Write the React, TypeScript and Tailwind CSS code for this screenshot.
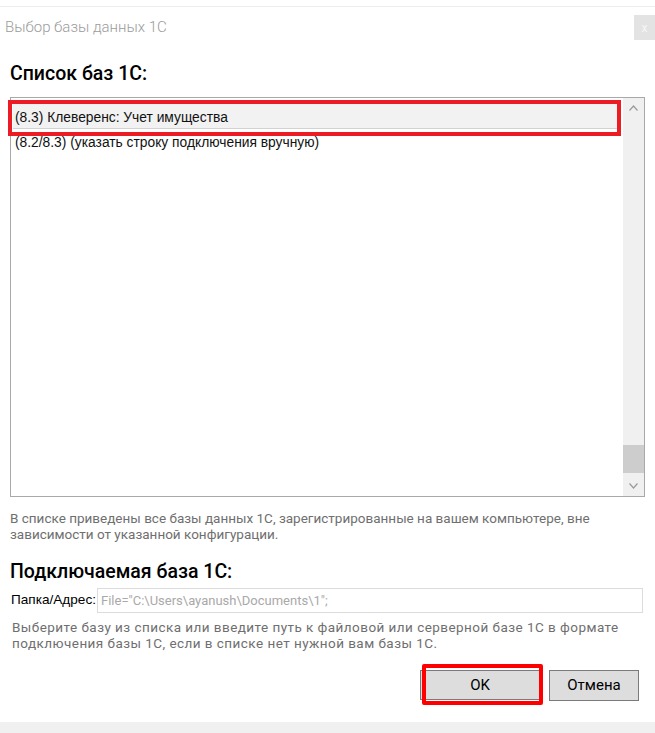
import React from 'react';

const ui = { fontFamily: 'Roboto, "Noto Sans", sans-serif' };
const sys = { fontFamily: '"Liberation Sans", Arial, sans-serif' };

const Chevron = ({ up }: { up?: boolean }) => (
  <svg width="9" height="6" viewBox="0 0 9 6" fill="none">
    <path
      d={up ? 'M0.5 5.5 L4.5 1 L8.5 5.5' : 'M0.5 0.5 L4.5 5 L8.5 0.5'}
      stroke="#9a9a9a"
      strokeWidth="1.2"
    />
  </svg>
);

export default function App() {
  return (
    <div className="relative w-[655px] h-[733px] bg-white flex flex-col overflow-hidden" style={ui}>
      <div className="h-[6px]" />
      <div className="h-px bg-[#ededed]" />

      {/* title bar */}
      <div className="mt-[8px] h-[25px] flex items-center justify-between">
        <span className="pl-[5px] text-[15px] font-light text-[#9b9b9b]">Выбор базы данных 1С</span>
        <div className="w-[21px] h-[25px] bg-[#e3e3e3] flex items-center justify-center text-[12px] text-[#f7f7f7]">x</div>
      </div>

      <h2 className="mt-[22px] h-[24px] leading-[24px] px-[10px] text-[19.5px] font-medium text-black">Список баз 1С:</h2>

      {/* list */}
      <div className="mt-[11px] ml-[10px] w-[635px] h-[400px] border border-[#a9a9a9] flex" style={sys}>
        <div className="flex-1 flex flex-col">
          <div className="mt-[6px] ml-[2px] mr-[4px] h-[25px] bg-[#f2f2f2] border-b border-[#d2d2d2] flex items-center pt-[4px] pl-[2px] text-[13.8px] text-[#111]">
            (8.3) Клеверенс: Учет имущества
          </div>
          <div className="mt-[4px] ml-[2px] h-[20px] flex items-center pl-[2px] text-[13.8px] text-[#111]">
            (8.2/8.3) (указать строку подключения вручную)
          </div>
        </div>
        <div className="w-[21px] bg-[#f0f0f0] flex flex-col">
          <div className="h-[20px] flex items-center justify-center"><Chevron up /></div>
          <div className="flex-1" />
          <div className="h-[28px] bg-[#cdcdcd]" />
          <div className="h-[3px]" />
          <div className="h-[20px] flex items-center justify-center"><Chevron /></div>
        </div>
      </div>

      <p className="mt-[13px] px-[10px] text-[13.5px] leading-[16px] text-[#6f6f6f]">
        В списке приведены все базы данных 1С, зарегистрированные на вашем компьютере, вне
        <br />
        зависимости от указанной конфигурации.
      </p>

      <h2 className="mt-[18px] h-[24px] leading-[24px] px-[10px] text-[19.5px] font-medium text-black">Подключаемая база 1С:</h2>

      <div className="mt-[4px] h-[25px] flex items-center">
        <span className="pl-[11px] w-[97px] text-[13.6px] text-black whitespace-nowrap" style={sys}>Папка/Адрес:</span>
        <div className="w-[546px] h-[25px] border border-[#dcdcdc] flex items-center pl-[3px] text-[13px] text-[#a9a9a9]">
          File="C:\Users\ayanush\Documents\1";
        </div>
      </div>

      <p className="mt-[6px] pl-[12px] text-[13.5px] tracking-[0.45px] leading-[16px] text-[#6f6f6f]">
        Выберите базу из списка или введите путь к файловой или серверной базе 1С в формате
        <br />
        подключения базы 1С, если в списке нет нужной вам базы 1С.
      </p>

      <div className="mt-[19px] flex justify-end gap-[9px] pr-[16px]">
        <button className="w-[120px] h-[30px] bg-[#dddddd] border border-[#7a7a7a] text-[15px] text-black">OK</button>
        <button className="w-[90px] h-[31px] bg-[#dddddd] border border-[#7a7a7a] text-[15px] text-black">Отмена</button>
      </div>

      <div className="mt-auto h-[11px] bg-[#f0f0f0]" />

      {/* annotation frames */}
      <div className="absolute left-[8px] top-[100px] w-[613px] h-[36px] border-[4px] border-[#ec1c24]" />
      <div className="absolute left-[422px] top-[664px] w-[121px] h-[41px] border-[4px] border-[#ff0000] rounded-[2px]" />
    </div>
  );
}
